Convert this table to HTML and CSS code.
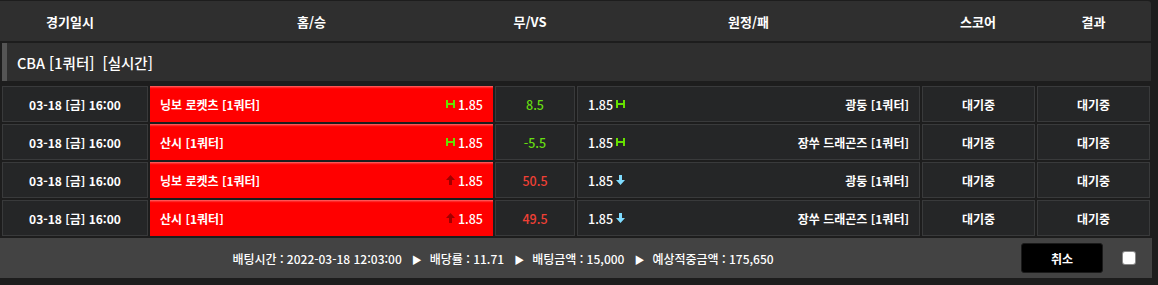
FILE: index.html
```html
<!DOCTYPE html>
<html lang="ko">
<head>
<meta charset="utf-8">
<link rel="stylesheet" href="styles.css">
</head>
<body>
<div class="board">
  <div class="head">
    <div>경기일시</div>
    <div>홈/승</div>
    <div>무/VS</div>
    <div>원정/패</div>
    <div>스코어</div>
    <div>결과</div>
  </div>
  <div class="league"><span class="bar"></span>CBA [1쿼터]&nbsp; [실시간]</div>
  <div class="rows">
    <div class="row">
      <div class="cell date">03-18 [금] 16:00</div>
      <div class="cell home"><span>닝보 로켓츠 [1쿼터]</span><span class="odds"><svg class="ic" viewBox="0 0 9 8"><path d="M0 0h2v8H0zM7 0h2v8H7zM2 3h5v2H2z" fill="#66e000"/></svg>1.85</span></div>
      <div class="cell vs up">8.5</div>
      <div class="cell away"><span class="odds">1.85<svg class="ic" viewBox="0 0 9 8"><path d="M0 0h2v8H0zM7 0h2v8H7zM2 3h5v2H2z" fill="#66e000"/></svg></span><span>광둥 [1쿼터]</span></div>
      <div class="cell st">대기중</div>
      <div class="cell st">대기중</div>
    </div>
    <div class="row">
      <div class="cell date">03-18 [금] 16:00</div>
      <div class="cell home"><span>산시 [1쿼터]</span><span class="odds"><svg class="ic" viewBox="0 0 9 8"><path d="M0 0h2v8H0zM7 0h2v8H7zM2 3h5v2H2z" fill="#66e000"/></svg>1.85</span></div>
      <div class="cell vs up">-5.5</div>
      <div class="cell away"><span class="odds">1.85<svg class="ic" viewBox="0 0 9 8"><path d="M0 0h2v8H0zM7 0h2v8H7zM2 3h5v2H2z" fill="#66e000"/></svg></span><span>장쑤 드래곤즈 [1쿼터]</span></div>
      <div class="cell st">대기중</div>
      <div class="cell st">대기중</div>
    </div>
    <div class="row">
      <div class="cell date">03-18 [금] 16:00</div>
      <div class="cell home"><span>닝보 로켓츠 [1쿼터]</span><span class="odds"><svg class="ic ar" viewBox="0 0 9 10"><path d="M4.5 0L9 5H6v5H3V5H0z" fill="#a00000"/></svg>1.85</span></div>
      <div class="cell vs down">50.5</div>
      <div class="cell away"><span class="odds">1.85<svg class="ic ar" viewBox="0 0 9 10"><path d="M4.5 10L9 5H6V0H3v5H0z" fill="#7fdcff"/></svg></span><span>광둥 [1쿼터]</span></div>
      <div class="cell st">대기중</div>
      <div class="cell st">대기중</div>
    </div>
    <div class="row">
      <div class="cell date">03-18 [금] 16:00</div>
      <div class="cell home"><span>산시 [1쿼터]</span><span class="odds"><svg class="ic ar" viewBox="0 0 9 10"><path d="M4.5 0L9 5H6v5H3V5H0z" fill="#a00000"/></svg>1.85</span></div>
      <div class="cell vs down">49.5</div>
      <div class="cell away"><span class="odds">1.85<svg class="ic ar" viewBox="0 0 9 10"><path d="M4.5 10L9 5H6V0H3v5H0z" fill="#7fdcff"/></svg></span><span>장쑤 드래곤즈 [1쿼터]</span></div>
      <div class="cell st">대기중</div>
      <div class="cell st">대기중</div>
    </div>
  </div>
  <div class="foot">
    <div class="summary">배팅시간 : 2022-03-18 12:03:00<span class="tri">▶</span>배당률 : 11.71<span class="tri">▶</span>배팅금액 : 15,000<span class="tri">▶</span>예상적중금액 : 175,650</div>
    <button class="cancel">취소</button>
    <span class="check"></span>
  </div>
</div>
</body>
</html>
```

FILE: styles.css
```css
html, body {
  margin: 0;
  padding: 0;
  background: #1d1d1d;
}
body {
  font-family: "Noto Sans CJK KR", "Noto Sans", sans-serif;
  color: #fff;
  font-size: 12px;
  width: 1158px;
  height: 285px;
  overflow: hidden;
}
.board {
  width: 1152px;
  padding-top: 1px;
}
.head {
  display: grid;
  grid-template-columns: 140px 343px 94px 343px 116px 115px;
  height: 40px;
  background: #2f2f2f;
  margin-right: 1px;
  border-radius: 0 3px 0 0;
}
.head div {
  display: flex;
  align-items: center;
  justify-content: center;
  font-size: 13px;
  font-weight: 700;
}
.league {
  display: flex;
  align-items: center;
  height: 38px;
  margin: 2px 1px 0 2px;
  background: #2f2f2f;
  font-size: 14.5px;
  font-weight: 500;
}
.league .bar {
  width: 5px;
  align-self: stretch;
  background: #555;
  margin-right: 10px;
}
.rows {
  display: flex;
  flex-direction: column;
  gap: 2px;
  padding: 5px 2px 2px 2px;
}
.row {
  display: grid;
  grid-template-columns: 146px 343px 80px 343px 113px 113px;
  gap: 2px;
  height: 36px;
}
.cell {
  box-sizing: border-box;
  background: #252627;
  border: 1px solid #393a3b;
  display: flex;
  align-items: center;
  font-weight: 700;
}
.date, .st, .vs {
  justify-content: center;
}
.vs {
  font-weight: 500;
  font-size: 12.5px;
}
.up { color: #66dd11; }
.down { color: #f04035; }
.home {
  background: linear-gradient(#ff6a6a 0, #ff1010 2px, #ff0000 3px);
  border: none;
  justify-content: space-between;
  padding: 0 10px 0 10px;
}
.away {
  justify-content: space-between;
  padding: 0 10px 0 10px;
}
.odds {
  display: flex;
  align-items: center;
  gap: 3px;
  font-weight: 500;
  font-size: 12.5px;
}
.ic {
  width: 9px;
  height: 8px;
  display: block;
}
.ic.ar {
  height: 10px;
}
.foot {
  display: flex;
  align-items: center;
  height: 40px;
  background: #434343;
}
.summary {
  width: 1006px;
  text-align: center;
  font-size: 12px;
  font-weight: 500;
}
.tri {
  display: inline-block;
  font-size: 10px;
  margin: 0 8px 0 10px;
}
.cancel {
  margin-left: 15px;
  width: 82px;
  height: 30px;
  background: #000;
  border: 1px solid #1a1a1a;
  border-radius: 3px;
  color: #fff;
  font-family: inherit;
  font-size: 12px;
  font-weight: 700;
  padding: 0;
}
.check {
  margin-left: 20px;
  width: 12px;
  height: 12px;
  background: #fff;
  border-radius: 2px;
  box-shadow: 0 0 0 1px #888;
}
```
